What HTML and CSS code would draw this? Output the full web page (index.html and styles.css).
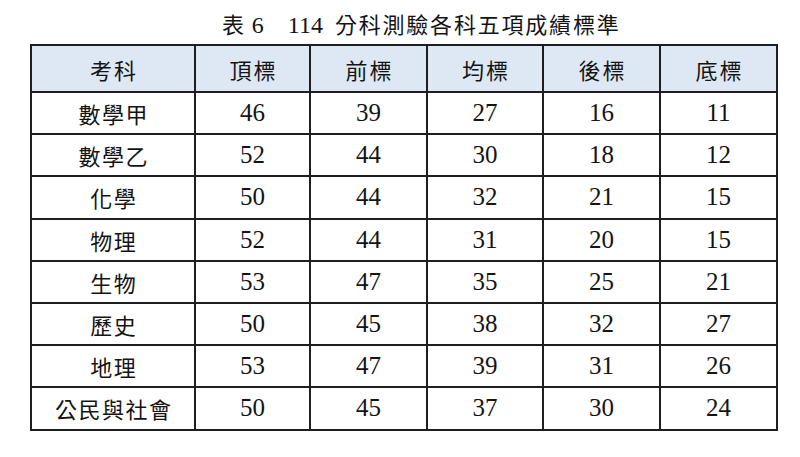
FILE: index.html
```html
<!DOCTYPE html>
<html lang="zh-Hant">
<head>
<meta charset="utf-8">
<link rel="stylesheet" href="styles.css">
</head>
<body>
<div class="page">
  <div class="title"><span class="cjk">表</span><span class="num"> 6　114  </span><span class="cjk">分科測驗各科五項成績標準</span></div>
  <table class="grid">
    <colgroup>
      <col class="c1"><col class="c2"><col class="c3"><col class="c4"><col class="c5"><col class="c6">
    </colgroup>
    <thead>
      <tr><th>考科</th><th>頂標</th><th>前標</th><th>均標</th><th>後標</th><th>底標</th></tr>
    </thead>
    <tbody>
      <tr><td class="sub">數學甲</td><td>46</td><td>39</td><td>27</td><td>16</td><td>11</td></tr>
      <tr><td class="sub">數學乙</td><td>52</td><td>44</td><td>30</td><td>18</td><td>12</td></tr>
      <tr><td class="sub">化學</td><td>50</td><td>44</td><td>32</td><td>21</td><td>15</td></tr>
      <tr><td class="sub">物理</td><td>52</td><td>44</td><td>31</td><td>20</td><td>15</td></tr>
      <tr><td class="sub">生物</td><td>53</td><td>47</td><td>35</td><td>25</td><td>21</td></tr>
      <tr><td class="sub">歷史</td><td>50</td><td>45</td><td>38</td><td>32</td><td>27</td></tr>
      <tr><td class="sub">地理</td><td>53</td><td>47</td><td>39</td><td>31</td><td>26</td></tr>
      <tr><td class="sub">公民與社會</td><td>50</td><td>45</td><td>37</td><td>30</td><td>24</td></tr>
    </tbody>
  </table>
</div>
</body>
</html>
```

FILE: styles.css
```css
html, body {
  margin: 0;
  padding: 0;
  background: #ffffff;
}
body {
  font-family: "Liberation Serif", "Noto Sans CJK TC", serif;
  color: #141414;
}
.page {
  width: 800px;
  height: 457px;
  padding-top: 10px;
  box-sizing: border-box;
}
.title {
  padding-left: 222px;
  font-size: 22px;
  line-height: 30px;
  height: 30px;
  white-space: pre;
  margin-bottom: 4px;
}
.title .num {
  font-size: 24px;
}
.title .cjk {
  letter-spacing: 1.8px;
}
.grid {
  margin-left: 30px;
  border-collapse: collapse;
  table-layout: fixed;
  width: 746px;
}
.c1 { width: 164px; }
.c2 { width: 115px; }
.c3 { width: 117px; }
.c4 { width: 116px; }
.c5 { width: 117px; }
.c6 { width: 117px; }
.grid th, .grid td {
  border: 2px solid #1e1e1e;
  text-align: center;
  vertical-align: middle;
  padding: 0;
}
.grid th {
  background: #dde8f4;
  height: 45px;
  font-weight: normal;
  font-size: 22px;
  letter-spacing: 2px;
  text-indent: 2px;
}
.grid td {
  height: 40.2px;
  font-size: 25px;
}
.grid td.sub {
  font-size: 22px;
  letter-spacing: 1.5px;
  text-indent: 1.5px;
}
```
